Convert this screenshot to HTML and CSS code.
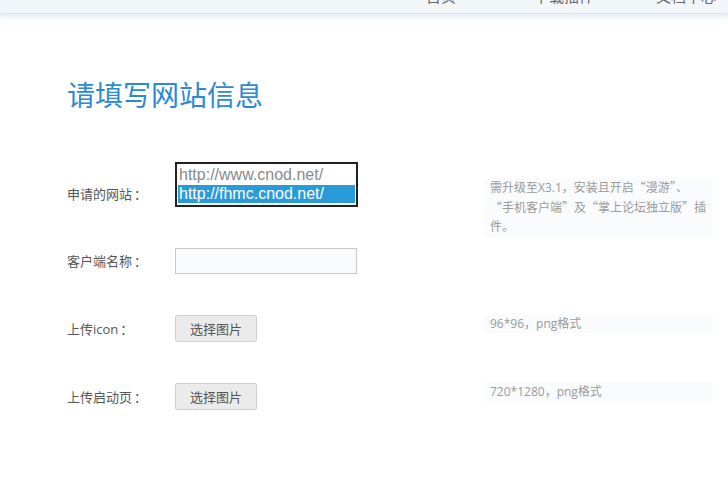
FILE: index.html
```html
<!DOCTYPE html>
<html lang="zh-CN">
<head>
<meta charset="utf-8">
<title>请填写网站信息</title>
<link rel="stylesheet" href="styles.css">
</head>
<body>
<header class="topbar">
  <div class="logo">CNOD.NET</div>
  <nav class="nav">
    <a class="nav-item nav-home">首页</a>
    <a class="nav-item nav-plugin">下载插件</a>
    <a class="nav-item nav-doc">文档中心</a>
  </nav>
</header>

<main class="page">
  <h1 class="title">请填写网站信息</h1>

  <div class="form">
    <div class="row row-site">
      <div class="label">申请的网站<span class="cp">：</span></div>
      <div class="control">
        <div class="listbox" role="listbox">
          <div class="option" role="option">http://www.cnod.net/</div>
          <div class="option selected" role="option" aria-selected="true">http://fhmc.cnod.net/</div>
        </div>
      </div>
      <div class="hint hint-site">需升级至X3.1<span class="cp">，</span>安装且开启<span class="cp">“</span>漫游<span class="cp">”、</span><br><span class="cp">“</span>手机客户端<span class="cp">”</span>及<span class="cp">“</span>掌上论坛独立版<span class="cp">”</span>插<br>件<span class="cp">。</span></div>
    </div>

    <div class="row">
      <div class="label">客户端名称<span class="cp">：</span></div>
      <div class="control">
        <input class="text-input" type="text">
      </div>
    </div>

    <div class="row">
      <div class="label">上传icon<span class="cp">：</span></div>
      <div class="control">
        <button class="btn" type="button">选择图片</button>
      </div>
      <div class="hint hint-small">96*96<span class="cp">，</span>png格式</div>
    </div>

    <div class="row">
      <div class="label">上传启动页<span class="cp">：</span></div>
      <div class="control">
        <button class="btn" type="button">选择图片</button>
      </div>
      <div class="hint hint-small">720*1280<span class="cp">，</span>png格式</div>
    </div>
  </div>
</main>
</body>
</html>
```

FILE: styles.css
```css
html, body {
  margin: 0;
  padding: 0;
  background: #ffffff;
}

body {
  font-family: "Open Sans", "Noto Sans CJK SC", sans-serif;
  color: #555;
  width: 728px;
  height: 493px;
  overflow: hidden;
}

.cp {
  font-family: "Noto Sans CJK TC", "Noto Sans CJK SC", sans-serif;
}

.topbar {
  position: relative;
  height: 13px;
  background: #f3f6f9;
  border-bottom: 1px solid #dfe7ee;
  box-shadow: 0 2px 6px rgba(190, 210, 228, 0.55);
  overflow: hidden;
  display: flex;
  align-items: flex-end;
}

.logo {
  margin-left: -52px;
  margin-bottom: 8px;
  font-family: "Liberation Sans", sans-serif;
  font-weight: bold;
  font-size: 34px;
  line-height: 34px;
  color: #1b4f93;
  letter-spacing: 1px;
}

.nav {
  display: flex;
  margin-left: auto;
  margin-bottom: 10px;
}

.nav-item {
  font-family: "Noto Sans CJK SC", sans-serif;
  font-size: 15px;
  line-height: 15px;
  color: #666;
}

.nav-home { margin-right: 78px; }
.nav-plugin { margin-right: 62px; }
.nav-doc { margin-right: 12px; }

.page {
  padding-left: 67px;
}

.title {
  margin: 63px 0 0 0;
  font-family: "Noto Sans CJK SC", sans-serif;
  font-size: 28px;
  line-height: 34px;
  font-weight: normal;
  color: #2b8ad3;
}

.form {
  margin-top: 51px;
  display: flex;
  flex-direction: column;
  gap: 41px;
}

.row {
  display: flex;
  align-items: center;
}

.label {
  width: 108px;
  font-size: 13px;
  line-height: 18px;
  color: #555;
  white-space: nowrap;
}

.label .cp {
  margin-left: 2px;
}

.control {
  width: 183px;
  flex: none;
}

.row-site {
  align-items: flex-start;
  height: 45px;
}

.row-site .label {
  margin-top: 23px;
}

.listbox {
  width: 179px;
  height: 41px;
  border: 2px solid #222;
  background: #fff;
  overflow: hidden;
}

.option {
  font-family: "Liberation Sans", sans-serif;
  font-size: 16px;
  padding-left: 2px;
  white-space: nowrap;
  color: #8a8a8a;
}

.option:first-child {
  height: 21px;
  line-height: 22px;
}

.option.selected {
  height: 18px;
  line-height: 17px;
  background: #2a9bd9;
  color: #ffffff;
  margin: 0 1px;
  padding-left: 1px;
}

.text-input {
  display: block;
  box-sizing: border-box;
  width: 182px;
  height: 26px;
  margin: 0;
  border: 1px solid #c8c8c8;
  background: #f9fbfd;
  padding: 0 6px;
  outline: none;
}

.btn {
  display: block;
  box-sizing: border-box;
  width: 82px;
  height: 27px;
  margin: 0;
  padding: 0;
  border: 1px solid #cfcfcf;
  border-radius: 2px;
  background: #ebebeb;
  font-family: "Noto Sans CJK SC", sans-serif;
  font-size: 13px;
  color: #555;
  cursor: pointer;
}

.hint {
  flex: none;
  margin-left: 126px;
  width: 217px;
  padding: 0 6px;
  background: #f9fbfd;
  font-size: 12px;
  line-height: 18.5px;
  color: #9a9a9a;
  white-space: nowrap;
}

.hint-site {
  margin-top: 16px;
}

.hint-small {
  align-self: flex-start;
  margin-top: -1px;
  line-height: 18px;
}
```
